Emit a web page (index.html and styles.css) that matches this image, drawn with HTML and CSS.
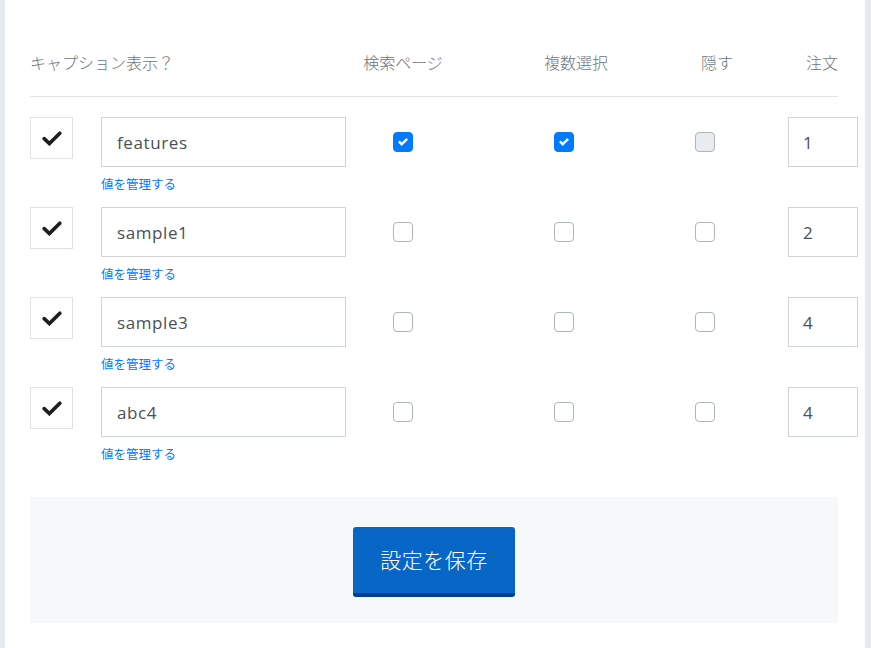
FILE: index.html
```html
<!DOCTYPE html>
<html lang="ja">

<head>
    <meta charset="UTF-8" />
    <meta name="viewport" content="width=device-width, initial-scale=1.0" />
    <title>キャプション設定</title>
    <link rel="stylesheet" href="styles.css">
</head>

<body>

    <div class="card">
        <div class="field-head">
            <div>キャプション表示？</div>
            <div class="center">検索ページ</div>
            <div class="center">複数選択</div>
            <div class="center">隠す</div>
            <div class="right">注文</div>
        </div>

        <div class="field-list">
            <div class="field-row">
                <button class="toggle-btn" type="button">
                    <svg width="20" height="15" viewBox="0 0 20 15"><polyline points="2.2,7.6 7.4,12.6 17.8,2.2" fill="none" stroke="#1e1e1e" stroke-width="3.6" stroke-linecap="round" stroke-linejoin="miter" /></svg>
                </button>
                <div class="name-cell">
                    <input class="text-input" type="text" value="features" />
                    <a class="manage" href="#">値を管理する</a>
                </div>
                <div class="cb-cell"><span class="cb on"></span></div>
                <div class="cb-cell"><span class="cb on"></span></div>
                <div class="cb-cell"><span class="cb muted"></span></div>
                <div class="order-cell"><input class="order-input" type="text" value="1" /></div>
            </div>

            <div class="field-row">
                <button class="toggle-btn" type="button">
                    <svg width="20" height="15" viewBox="0 0 20 15"><polyline points="2.2,7.6 7.4,12.6 17.8,2.2" fill="none" stroke="#1e1e1e" stroke-width="3.6" stroke-linecap="round" stroke-linejoin="miter" /></svg>
                </button>
                <div class="name-cell">
                    <input class="text-input" type="text" value="sample1" />
                    <a class="manage" href="#">値を管理する</a>
                </div>
                <div class="cb-cell"><span class="cb"></span></div>
                <div class="cb-cell"><span class="cb"></span></div>
                <div class="cb-cell"><span class="cb"></span></div>
                <div class="order-cell"><input class="order-input" type="text" value="2" /></div>
            </div>

            <div class="field-row">
                <button class="toggle-btn" type="button">
                    <svg width="20" height="15" viewBox="0 0 20 15"><polyline points="2.2,7.6 7.4,12.6 17.8,2.2" fill="none" stroke="#1e1e1e" stroke-width="3.6" stroke-linecap="round" stroke-linejoin="miter" /></svg>
                </button>
                <div class="name-cell">
                    <input class="text-input" type="text" value="sample3" />
                    <a class="manage" href="#">値を管理する</a>
                </div>
                <div class="cb-cell"><span class="cb"></span></div>
                <div class="cb-cell"><span class="cb"></span></div>
                <div class="cb-cell"><span class="cb"></span></div>
                <div class="order-cell"><input class="order-input" type="text" value="4" /></div>
            </div>

            <div class="field-row">
                <button class="toggle-btn" type="button">
                    <svg width="20" height="15" viewBox="0 0 20 15"><polyline points="2.2,7.6 7.4,12.6 17.8,2.2" fill="none" stroke="#1e1e1e" stroke-width="3.6" stroke-linecap="round" stroke-linejoin="miter" /></svg>
                </button>
                <div class="name-cell">
                    <input class="text-input" type="text" value="abc4" />
                    <a class="manage" href="#">値を管理する</a>
                </div>
                <div class="cb-cell"><span class="cb"></span></div>
                <div class="cb-cell"><span class="cb"></span></div>
                <div class="cb-cell"><span class="cb"></span></div>
                <div class="order-cell"><input class="order-input" type="text" value="4" /></div>
            </div>
        </div>

        <div class="save-bar">
            <button class="save-btn" type="button">設定を保存</button>
        </div>
    </div>

</body>

</html>
```

FILE: styles.css
```css
* {
    box-sizing: border-box;
}

body {
    margin: 0;
    font-family: 'Open Sans', 'Noto Sans CJK JP', sans-serif;
    background-color: #e6e9ed;
    color: #495057;
}

.card {
    width: 860px;
    min-height: 100vh;
    margin-left: 5px;
    background: #fff;
    padding: 51px 27px 40px 25px;
}

.field-head {
    display: grid;
    grid-template-columns: 316px 114px 232px 50px 96px;
    font-size: 16px;
    line-height: 24px;
    font-weight: 300;
    color: #6c757d;
    padding-bottom: 21px;
    border-bottom: 1px solid #e1e4e8;
}

.field-head .center {
    text-align: center;
}

.field-head .right {
    text-align: right;
}

.field-list {
    display: flex;
    flex-direction: column;
    gap: 13px;
    margin-top: 20px;
}

.field-row {
    display: grid;
    grid-template-columns: 71px 245px 114px 208px 74px 116px;
    align-items: start;
}

.toggle-btn {
    width: 43px;
    height: 42px;
    padding: 0;
    border: 1px solid #dee2e6;
    background: #fff;
    display: flex;
    align-items: center;
    justify-content: center;
    cursor: pointer;
}

.name-cell {
    display: flex;
    flex-direction: column;
    align-items: flex-start;
}

.text-input,
.order-input {
    height: 50px;
    border: 1px solid #ced4da;
    border-radius: 0;
    padding: 0 15px;
    font-family: inherit;
    font-size: 17px;
    letter-spacing: 0.6px;
    color: #495057;
    background: #fff;
}

.text-input {
    width: 245px;
}

.manage {
    margin-top: 9px;
    font-size: 12.5px;
    line-height: 18px;
    color: #007bff;
    text-decoration: none;
}

.cb-cell {
    height: 50px;
    display: flex;
    align-items: center;
    justify-content: center;
}

.cb {
    width: 20px;
    height: 20px;
    border: 1px solid #adb5bd;
    border-radius: 4px;
    background: #fff;
}

.cb.muted {
    background: #e9ecef;
}

.cb.on {
    border-color: #007bff;
    background: #007bff url("data:image/svg+xml,%3csvg xmlns='http://www.w3.org/2000/svg' viewBox='0 0 8 8'%3e%3cpath fill='%23fff' d='M6.564.75l-3.59 3.612-1.538-1.55L0 4.26l2.974 2.99L8 2.193z'/%3e%3c/svg%3e") no-repeat center / 10px 10px;
}

.order-cell {
    display: flex;
    justify-content: flex-end;
}

.order-input {
    width: 70px;
    padding: 0 14px;
}

.save-bar {
    margin-top: 33px;
    background: #f7f8fa;
    padding: 30px 0 26px;
    display: flex;
    justify-content: center;
}

.save-btn {
    font-family: inherit;
    font-size: 21px;
    font-weight: 300;
    letter-spacing: 0.5px;
    line-height: 30px;
    color: #fff;
    background: #0866c6;
    border: none;
    border-bottom: 4px solid #003e8c;
    border-radius: 3px;
    padding: 18px 0;
    width: 162px;
    cursor: pointer;
}
```
